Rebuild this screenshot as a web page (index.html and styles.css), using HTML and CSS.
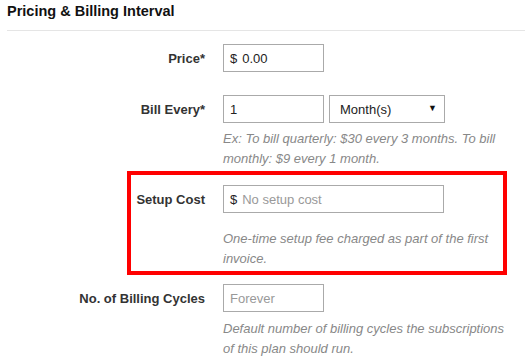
FILE: index.html
```html
<!DOCTYPE html>
<html lang="en">
  <head>
    <meta charset="UTF-8" />
    <meta name="viewport" content="width=device-width, initial-scale=1.0" />
    <title>Plan Pricing</title>
    <link rel="stylesheet" href="styles.css">
  </head>
  <body>
    <div class="section">
      <h3 class="section-title">Pricing &amp; Billing Interval</h3>

      <!-- Price -->
      <div class="form-row no-help">
        <label class="form-label">Price*</label>
        <div class="controls">
          <div class="field field-sm">
            <span class="prefix">$</span>
            <input type="text" value="0.00" />
          </div>
        </div>
      </div>

      <!-- Bill every -->
      <div class="form-row">
        <label class="form-label">Bill Every*</label>
        <div class="controls">
          <div class="inline">
            <div class="field field-sm">
              <input type="text" value="1" />
            </div>
            <div class="select-wrap">
              <select>
                <option>Month(s)</option>
                <option>Week(s)</option>
                <option>Year(s)</option>
              </select>
            </div>
          </div>
          <p class="help">Ex: To bill quarterly: $30 every 3 months. To bill monthly: $9 every 1 month.</p>
        </div>
      </div>

      <!-- Setup cost (highlighted) -->
      <div class="form-row highlight">
        <label class="form-label">Setup Cost</label>
        <div class="controls">
          <div class="field field-lg">
            <span class="prefix">$</span>
            <input type="text" placeholder="No setup cost" />
          </div>
          <p class="help help-spaced">One-time setup fee charged as part of the first invoice.</p>
        </div>
      </div>

      <!-- Billing cycles -->
      <div class="form-row">
        <label class="form-label">No. of Billing Cycles</label>
        <div class="controls">
          <div class="field field-sm">
            <input type="text" placeholder="Forever" />
          </div>
          <p class="help help-last">Default number of billing cycles the subscriptions of this plan should run.</p>
        </div>
      </div>
    </div>
  </body>
</html>
```

FILE: styles.css
```css
/* General styling */
body {
  font-family: "Liberation Sans", Arial, sans-serif;
  font-size: 13px;
  color: #333;
  background-color: #fff;
  margin: 0;
  padding: 0;
}

.section {
  padding-left: 7px;
}

.section-title {
  font-size: 14.5px;
  font-weight: bold;
  color: #111;
  margin: 0;
  padding: 3px 0 10px;
  line-height: 17px;
  border-bottom: 1px solid #e5e5e5;
  margin-bottom: 13px;
}

/* Form rows */
.form-row {
  display: grid;
  grid-template-columns: 198px 290px;
  column-gap: 18px;
  margin-bottom: 16px;
  position: relative;
}

.form-row.no-help {
  margin-bottom: 22px;
}

.form-label {
  text-align: right;
  font-weight: bold;
  color: #333;
  line-height: 29px;
}

.inline {
  display: flex;
  gap: 5px;
}

.field {
  display: flex;
  align-items: center;
  height: 28px;
  box-sizing: border-box;
  border: 1px solid #aaa;
  padding: 0 6px;
  background: #fff;
}

.field-sm {
  width: 101px;
}

.field-lg {
  width: 221px;
}

.prefix {
  color: #222;
  margin-right: 5px;
}

.field input {
  border: 0;
  outline: none;
  padding: 0;
  margin: 0;
  font: inherit;
  color: #222;
  width: 100%;
  background: transparent;
}

.field input::placeholder {
  color: #999;
}

/* Select with drawn arrow */
.select-wrap {
  position: relative;
  width: 116px;
}

.select-wrap select {
  appearance: none;
  -webkit-appearance: none;
  width: 100%;
  height: 28px;
  box-sizing: border-box;
  border: 1px solid #aaa;
  border-radius: 0;
  background: #fff;
  font: inherit;
  color: #222;
  padding: 0 10px;
  outline: none;
}

.select-wrap::after {
  content: "\25BC";
  position: absolute;
  right: 8px;
  top: 8px;
  font-size: 9px;
  color: #111;
  pointer-events: none;
}

/* Help text */
.help {
  margin: 6px 0 0;
  font-style: italic;
  color: #888;
  line-height: 20px;
}

.help-spaced {
  margin-top: 16px;
}

.help-last {
  margin-top: 7px;
}

/* Red annotation box round a row */
.highlight {
  margin-bottom: 15px;
}

.highlight::before {
  content: "";
  position: absolute;
  left: 120px;
  top: -14px;
  width: 380px;
  bottom: -6px;
  box-sizing: border-box;
  border: 4px solid #f00;
  pointer-events: none;
}
```
